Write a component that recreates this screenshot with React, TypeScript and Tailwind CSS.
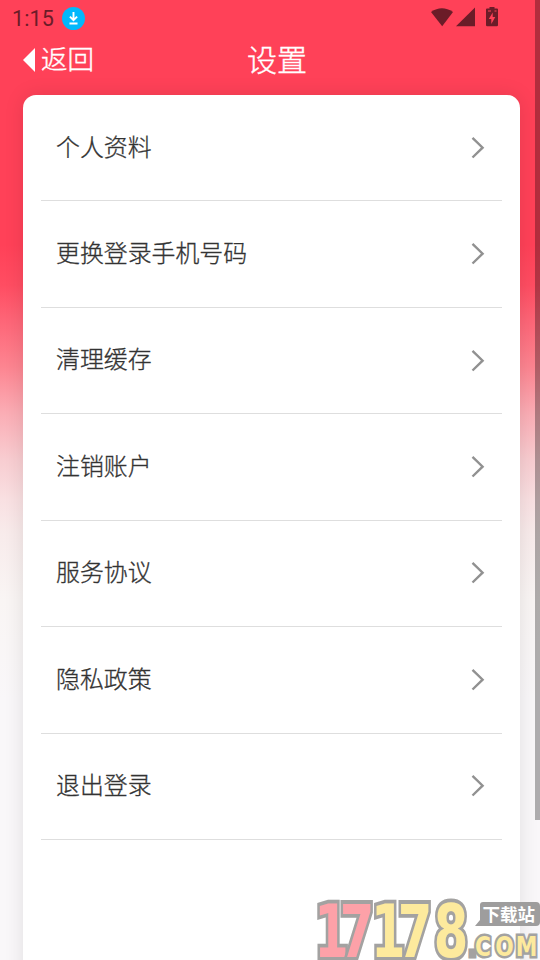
const items = ['个人资料', '更换登录手机号码', '清理缓存', '注销账户', '服务协议', '隐私政策', '退出登录'];

function Chevron() {
  return (
    <svg className="h-[22px] w-[14px]" viewBox="0 0 14 22" fill="none" stroke="#919191" strokeWidth="2.4">
      <path d="M1.5 0.900 11.600 10.700 1.500 20.500" />
    </svg>
  );
}

function StatusBar() {
  return (
    <div className="flex h-9 items-center justify-between pr-[42px] pl-[12px]">
      <div className="flex items-center gap-[8px]">
        <span className="mt-[2px] font-['Roboto',sans-serif] text-[21.5px] leading-9 font-normal tracking-[0.15px] text-[#6b1c28]">1:15</span>
        <svg className="h-[23px] w-[23px]" viewBox="0 0 23 23">
          <circle cx="11.5" cy="11.5" r="11.5" fill="#02b8fc" />
          <path d="M11.5 5v8M7.900 9.600l3.600 3.600 3.600-3.600M7.500 16.500h8" fill="none" stroke="#fff" strokeWidth="1.900" />
        </svg>
      </div>
      <svg className="-mt-px h-[21px] w-[68px]" viewBox="0 0 68 21" fill="#6b1c28">
        <path d="M1 5Q11.800-2.500 23 5L12.200 19.200Z" />
        <path d="M26 19.200 45 0.500V19.200Z" />
        <path
          fillRule="evenodd"
          d="M59.500 0h5v1.500h2.500q1 0 1 1V18q0 1.200-1.200 1.200H57.200q-1.200 0-1.200-1.200V2.500q0-1 1-1h2.500ZM62.700 5.500 58.800 12h2.500v5l4-7h-2.600Z"
        />
        <path d="M58 4h3M64.500 4h2" stroke="#ff4158" strokeWidth="1" />
      </svg>
    </div>
  );
}

function Watermark() {
  return (
    <svg
      className="absolute right-0 bottom-0 h-[62px] w-[226px]"
      viewBox="0 0 226 62"
      fontFamily="'DejaVu Sans', sans-serif"
      fontWeight="700"
      strokeLinejoin="miter"
      paintOrder="stroke"
    >
      <text
        transform="scale(0.68 1)"
        x="0.3 38 84 123 176"
        y="59"
        fontSize="73"
        stroke="#a3a2a1"
        strokeWidth="7.5"
        fill="#fda1a8"
      >
        17<tspan fill="#fdea9d">178</tspan>
      </text>
      <path d="M169 4h53q4 0 4 4v16q0 4-4 4H161l5-6V7q0-3 3-3Z" fill="#9e9d9d" />
      <text x="168.500" y="22.500" fontSize="17.500" fill="#fff" fontFamily="'Noto Sans CJK SC', sans-serif">
        下载站
      </text>
      <text
        transform="scale(0.82 1)"
        x="188 196.500 221 246"
        y="58.500"
        fontSize="26.500"
        fill="#fdea9d"
        stroke="#a3a2a1"
        strokeWidth="5"
      >
        <tspan fill="#a3a2a1">.</tspan>COM
      </text>
    </svg>
  );
}

export default function App() {
  return (
    <div className="relative h-[960px] w-[540px] overflow-hidden bg-[linear-gradient(180deg,#ff4158_0px,#ff4158_245px,#ff4d62_285px,#fe6577_320px,#fd8591_367px,#fbadb5_413px,#f8cdd1_460px,#f9e0e2_500px,#f8ebeb_533px,#f9f5f4_600px,#f9f7f9_700px,#f9f7f9_960px)] font-['Noto_Sans_CJK_SC',sans-serif] font-light">
      <StatusBar />
      <header className="grid h-[59px] grid-cols-3 pr-[8px] pl-[22px] text-white [-webkit-text-stroke:0.4px_currentColor]">
        <div className="flex h-[48px] items-center gap-[6px]">
          <svg className="h-6 w-[13px]" viewBox="0 0 13 24" fill="currentColor">
            <path d="M13 0v24L1 12Z" />
          </svg>
          <span className="-mt-[3px] text-[26.500px] leading-none">返回</span>
        </div>
        <h1 className="-mt-[2px] flex h-[48px] items-center justify-center text-[30px] leading-none">设置</h1>
      </header>
      <main className="mr-5 ml-[23px] h-[900px] rounded-[13px] bg-white px-[18px] shadow-[0_0_20px_rgba(0,0,0,0.1)]">
        {items.map((label) => (
          <div key={label} className="flex h-[106.45px] items-center justify-between border-b border-[#dedede] pr-[17px] pl-[15px]">
            <span className="-mt-[4.500px] text-[23.900px] leading-none text-[#333] [-webkit-text-stroke:0.3px_#333]">{label}</span>
            <Chevron />
          </div>
        ))}
      </main>
      <div className="absolute top-0 right-0 h-[820px] w-[5px] bg-black/30" />
      <Watermark />
    </div>
  );
}
